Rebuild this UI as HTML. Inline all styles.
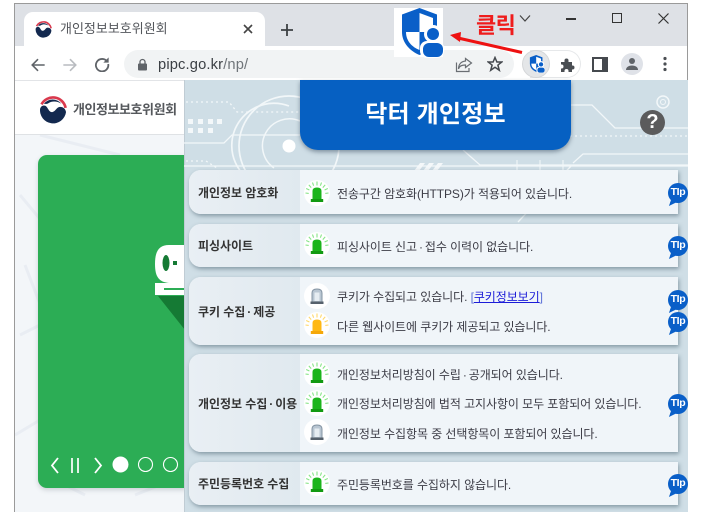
<!DOCTYPE html>
<html lang="ko"><head><meta charset="utf-8"><title>닥터 개인정보</title>
<style>
*{box-sizing:border-box;margin:0;padding:0}
html,body{width:720px;height:512px;overflow:hidden;background:#fff;font-family:"Liberation Sans","Noto Sans CJK KR",sans-serif}
.a{position:absolute}
#win{left:14px;top:3px;width:674px;height:509px;border:1px solid #9a9a9a;border-bottom:0;background:#fff}
.row{position:absolute;left:189px;width:489px;background:#f0f5f9;border-radius:12px 0 0 12px;box-shadow:1px 2px 4px rgba(60,85,100,.5)}
.lab{position:absolute;left:0;top:0;bottom:0;width:111px;background:linear-gradient(90deg,#e9eff4,#e0e9ef);border-radius:12px 0 0 12px;display:flex;align-items:center;padding-left:9px;font-size:12px;font-weight:700;color:#333;letter-spacing:-.05px;white-space:nowrap}
.t{position:absolute;left:337px;font-size:12px;line-height:16px;color:#3c3c46;letter-spacing:-.08px;white-space:nowrap}
.d{margin:0 2px}
.ic{position:absolute;left:304px;width:26px;height:26px;border-radius:50%;background:#fff}
.tip{position:absolute;left:668px;width:20px;height:20px;border-radius:50%;background:#0a5fc8;color:#fff;font-size:10.5px;font-weight:700;line-height:19px;text-align:center;letter-spacing:-.3px}
.tip:after{content:"";position:absolute;left:2px;bottom:-3px;border-left:5px solid #0a5fc8;border-top:3px solid #0a5fc8;border-right:3px solid transparent;border-bottom:3px solid transparent;width:0;height:0;transform:skewX(-20deg)}
</style></head><body>
<svg width="0" height="0" class="a"><defs>
<path id="rays" d="M13 1.500V5.500M8.500 2.500l1.100 3.200M17.500 2.500l-1.100 3.200M4.800 4.800l2.400 2.800M21.200 4.800l-2.400 2.800M2.200 8.500l3.200 1.500M23.800 8.500l-3.200 1.500M1.500 13l3.200.4M24.500 13l-3.200.4" fill="none" stroke-width="1.100"/>
<g id="g"><use href="#rays" stroke="#86e486"/><path d="M8.500 19.500V11q0-3.500 4.500-3.500t4.500 3.500v8.500z" fill="#1cb41c"/><rect x="6.800" y="19" width="12.400" height="3" fill="#129a12"/></g>
<g id="y"><use href="#rays" stroke="#ffd86a"/><path d="M8.500 19.500V11q0-3.500 4.500-3.500t4.500 3.500v8.500z" fill="#ffb814"/><rect x="6.800" y="19" width="12.400" height="3" fill="#f5a80a"/></g>
<g id="n"><path d="M8 19V10q0-4 5-4t5 4v9z" fill="#b9c6d2" stroke="#8494a3" stroke-width="1"/><rect x="10.500" y="9.500" width="5" height="8.500" fill="#e6edf2"/><rect x="6.500" y="18.500" width="13" height="2.500" fill="#56616c"/></g>
<g id="sh"><path d="M25.500 0 43 6.500V24C43 35 35 43 25.500 47 16 43 8 35 8 24V6.500Z" fill="#0a5fc8"/><path d="M25.500 5 39 10V24H25.500ZM12 24H25.500V42C18 39 12 33 12 24Z" fill="#fff"/><circle cx="39" cy="26" r="9" fill="#fff"/><rect x="26" y="33" width="24" height="17" rx="7" fill="#fff"/><circle cx="39" cy="26" r="6" fill="#0a5fc8"/><rect x="29" y="35" width="20" height="14" rx="6" fill="#0a5fc8"/></g>
<g id="emb"><circle cx="10" cy="10" r="9.800" fill="#fff"/><path d="M.8 9A9.300 9.300 0 0 0 19.300 11.500C19 9.500 17.500 7.800 15 7.800 12.500 7.800 12 11 9.500 11.500 7 12 6.500 8 4.500 7 3 6.400 1.500 7 .8 9Z" fill="#13294f"/><path d="M3.500 5.500A8 8 0 0 1 16 5.500C13 3.500 9 3.500 7 5 5.500 6 4.500 5.500 3.500 5.500Z" fill="#13294f"/><path d="M1.800 6A9.200 9.200 0 0 1 19 8.500" fill="none" stroke="#d9394d" stroke-width="1.900"/></g>
</defs></svg>

<div id="win" class="a"></div>
<div class="a" style="left:15px;top:4px;width:672px;height:42px;background:#dee1e6"></div>
<div class="a" style="left:24px;top:12px;width:241px;height:36px;background:#fff;border-radius:9px 9px 0 0"></div>
<svg class="a" style="left:35px;top:21px" width="17" height="17" viewBox="0 0 20 20"><use href="#emb"/></svg>
<div class="a" style="left:60px;top:20px;font-size:13px;line-height:17px;color:#54575c;letter-spacing:0;white-space:nowrap">개인정보보호위원회</div>
<svg class="a" style="left:243px;top:24px" width="10" height="10" viewBox="0 0 10 10"><path d="M1 1l8 8M9 1L1 9" stroke="#444" stroke-width="1.600"/></svg>
<svg class="a" style="left:280px;top:23px" width="14" height="14" viewBox="0 0 14 14"><path d="M7 1v12M1 7h12" stroke="#3c4043" stroke-width="1.800"/></svg>

<div class="a" style="left:15px;top:46px;width:672px;height:35px;background:#fff;border-bottom:1px solid #e2e4e7"></div>
<svg class="a" style="left:30px;top:57px" width="16" height="16" viewBox="0 0 18 18"><path d="M16.500 9H3M9 2.500 2.500 9 9 15.500" fill="none" stroke="#5f6368" stroke-width="1.800"/></svg>
<svg class="a" style="left:62px;top:57px" width="16" height="16" viewBox="0 0 18 18"><path d="M1.500 9h13M9 2.500 15.500 9 9 15.500" fill="none" stroke="#b9bcc0" stroke-width="1.800"/></svg>
<svg class="a" style="left:94px;top:56px" width="16" height="16" viewBox="0 0 18 18"><path d="M15 6.500A7 7 0 1 0 16 9" fill="none" stroke="#5f6368" stroke-width="2"/><path d="M16.500 1.500V7.500H10.500Z" fill="#5f6368"/></svg>
<div class="a" style="left:124px;top:50px;width:390px;height:28px;border-radius:14px;background:#f1f3f4"></div>
<svg class="a" style="left:137px;top:58px" width="11" height="13" viewBox="0 0 11 13"><path d="M3 6V4a2.500 2.500 0 0 1 5 0v2" fill="none" stroke="#5f6368" stroke-width="1.300"/><rect x="1" y="5.500" width="9" height="7" rx="1" fill="#5f6368"/></svg>
<div class="a" style="left:158px;top:55px;font-size:14.700px;line-height:20px;letter-spacing:.15px;color:#3b3f44;white-space:nowrap">pipc.go.kr<span style="color:#70757a">/np/</span></div>
<svg class="a" style="left:455px;top:56px" width="18" height="17" viewBox="0 0 18 17"><path d="M10.500 2.500 16.500 7l-6 4.500V9C6 9 4 10.500 3.500 13 3.500 8.500 6 5.500 10.500 5Z M1.500 6.500V15.500H14V12" fill="none" stroke="#6a6e73" stroke-width="1.200"/></svg>
<svg class="a" style="left:487px;top:56px" width="16" height="16" viewBox="0 0 16 16"><path d="M8 1.500 9.900 6H14.800L10.900 9.100 12.300 14.300 8 11.300 3.700 14.300 5.100 9.100 1.200 6H6.100Z" fill="none" stroke="#45494e" stroke-width="1.500"/></svg>

<div class="a" style="left:530px;top:50px;width:51px;height:28px;border:1px solid #e6e8ea;border-radius:0 14px 14px 0;border-left:0;background:#fff"></div>
<div class="a" style="left:522px;top:50px;width:28px;height:28px;border-radius:50%;background:#e4e6e8;border:1px solid #d5d7d9"></div>
<svg class="a" style="left:527px;top:55px" width="18" height="18" viewBox="0 0 50 50"><use href="#sh"/></svg>
<svg class="a" style="left:560px;top:57px" width="16" height="16" viewBox="0 0 16 16"><path d="M1 5h3.500V3.500a2 2 0 0 1 4 0V5H12v3.500h.5a2 2 0 0 1 0 4H12V15H8.500v-1a2 2 0 0 0-4 0v1H1v-3.500h.5a2 2 0 0 0 0-4H1Z" fill="#4a4e53"/></svg>
<svg class="a" style="left:592px;top:57px" width="16" height="15" viewBox="0 0 16 15"><rect x="1" y="1" width="14" height="13" fill="none" stroke="#45494e" stroke-width="2"/><rect x="10" y="1" width="5" height="13" fill="#45494e"/></svg>
<div class="a" style="left:621px;top:53px;width:22px;height:22px;border-radius:50%;background:#dfe2e8"></div>
<svg class="a" style="left:625px;top:57px" width="14" height="14" viewBox="0 0 14 14"><circle cx="7" cy="4" r="3" fill="#5f6368"/><path d="M1 13c0-3 3-4.500 6-4.500S13 10 13 13Z" fill="#5f6368"/></svg>
<svg class="a" style="left:663px;top:56px" width="4" height="16" viewBox="0 0 4 16"><circle cx="2" cy="2.500" r="1.600" fill="#4a4e53"/><circle cx="2" cy="8" r="1.600" fill="#4a4e53"/><circle cx="2" cy="13.500" r="1.600" fill="#4a4e53"/></svg>

<svg class="a" style="left:519px;top:14px" width="12" height="9" viewBox="0 0 12 9"><path d="M1 1.500 6 7l5-5.500" fill="none" stroke="#444" stroke-width="1.200"/></svg>
<div class="a" style="left:566px;top:18px;width:10px;height:1.500px;background:#333"></div>
<div class="a" style="left:612px;top:13px;width:10px;height:10px;border:1.300px solid #333"></div>
<svg class="a" style="left:658px;top:13px" width="11" height="11" viewBox="0 0 11 11"><path d="M.5.500l10 10M10.500.500l-10 10" stroke="#333" stroke-width="1.200"/></svg>

<div class="a" style="left:394px;top:8px;width:49px;height:49px;background:#fff"></div>
<svg class="a" style="left:394px;top:8px" width="50" height="50" viewBox="0 0 50 50"><use href="#sh"/></svg>
<div class="a" style="left:476px;top:13px;font-size:22px;line-height:26px;font-weight:700;color:#ef1c1c;letter-spacing:-.6px;white-space:nowrap">클릭</div>
<svg class="a" style="left:448px;top:28px" width="76" height="28" viewBox="0 0 76 28"><path d="M10 10 74 24.500" stroke="#ee1111" stroke-width="3"/><path d="M2 7 13 4 12 14Z" fill="#ee1111"/></svg>

<div class="a" style="left:15px;top:81px;width:170px;height:431px;background:#fff"></div>
<svg class="a" style="left:39px;top:96px" width="28" height="28" viewBox="0 0 20 20"><use href="#emb"/></svg>
<div class="a" style="left:73px;top:101px;font-size:13px;line-height:18px;color:#55585c;font-weight:700;letter-spacing:-.45px;white-space:nowrap">개인정보보호위원회</div>
<div class="a" style="left:15px;top:134px;width:170px;height:378px;background:#f3f6f9;border-top:1px solid #dfe2e5"></div>
<svg class="a" style="left:15px;top:135px" width="170" height="377" viewBox="0 0 170 377" fill="none" stroke="#e9edf3" stroke-width="3"><path d="M5 60l25 30M10 130l25 65M5 200l30-15M30 340l40 20M0 300l25-15M120 360l50-20M25 0l80 20"/></svg>
<div class="a" style="left:38px;top:155px;width:148px;height:333px;background:#2cad55;border-radius:9px 0 0 9px;box-shadow:0 2px 5px rgba(90,100,110,.25)"></div>
<svg class="a" style="left:155px;top:245px" width="30" height="85" viewBox="0 0 30 85"><path d="M30 0H14C4 0 0 6 0 19S4 37 14 38H30Z" fill="#fff"/><ellipse cx="11" cy="18" rx="3.500" ry="8" fill="#157a34"/><rect x="18" y="16" width="4" height="4" fill="#157a34"/><path d="M0 38H30V50H0Z" fill="#fff"/><path d="M9 44H30" stroke="#2cad55" stroke-width="2"/><path d="M3 51H30V85Z" fill="#157a34"/></svg>
<svg class="a" style="left:50px;top:454px" width="130" height="24" viewBox="0 0 130 24" fill="none" stroke="#fff"><path d="M8 4 2 11.500 8 19M45 4l6 7.500-6 7.500" stroke-width="1.800"/><path d="M22 4v15M28 4v15" stroke-width="1.700"/><circle cx="70.500" cy="10.500" r="7.500" fill="#fff"/><circle cx="95.500" cy="10.500" r="7" stroke-width="1.100"/><circle cx="120.500" cy="10.500" r="7" stroke-width="1.100"/></svg>

<div class="a" style="left:184px;top:80px;width:504px;height:432px;background:#cfdee6;border-left:1px solid #c0ccd4"></div>
<svg class="a" style="left:184px;top:80px" width="504" height="170" viewBox="0 0 504 170" fill="none" stroke="#f2f7f9">
<path d="M2 22H45L53 32H116M2 81H22L33 88M386 56H504" stroke-width="1.300" stroke-dasharray="2 3"/>
<path d="M0 63H40L48 55H116M386 25H408L431 48H504M389 83 399 74H504M279 70 296 85H504M0 86H504M388 85 334 142" stroke-width="1.300"/>
<circle cx="105" cy="66" r="50" stroke-width="1.700"/>
<path d="M75 105A40 40 0 0 1 105 26" stroke-width="1.700"/>
<path d="M90 88A27 27 0 0 1 116 41" stroke-width="1.500"/>
<circle cx="105" cy="66" r="6.500" fill="#fff" stroke="none"/>
<path d="M4 39h5v5H4zM14 39h5v5h-5zM24 39h5v5h-5zM33 39h5v5h-5zM4 48h5v5H4zM14 48h5v5h-5zM24 48h5v5h-5z" fill="#f4f8fa" stroke="none"/>
<path d="M236 83h5l-6 8h-5zM245 83h5l-6 8h-5zM254 83h5l-6 8h-5z" fill="#f4f8fa" stroke="none"/>
<path d="M333 80v10M356 80v10M379 80v10" stroke-width="1.100"/>
<circle cx="479" cy="22" r="6" stroke-width="1.500"/>
<circle cx="479" cy="22" r="2.500" stroke-width="1"/>
</svg>
<div class="a" style="left:300px;top:80px;width:271px;height:70px;background:#0660c2;border-radius:0 0 18px 18px;box-shadow:0 2px 4px rgba(50,70,90,.5);color:#fff;font-size:24px;font-weight:700;line-height:70px;text-align:center;letter-spacing:.2px;white-space:nowrap">닥터 개인정보</div>
<div class="a" style="left:640px;top:110px;width:25px;height:25px;border-radius:50%;background:#5b5b5c;color:#fff;font-size:20px;font-weight:700;line-height:25px;text-align:center">?</div>

<div class="row" style="top:170px;height:44px"><div class="lab">개인정보 암호화</div></div>
<div class="row" style="top:224px;height:43px"><div class="lab">피싱사이트</div></div>
<div class="row" style="top:277px;height:68px"><div class="lab"><span>쿠키 수집<span class="d">·</span>제공</span></div></div>
<div class="row" style="top:354px;height:98px"><div class="lab"><span>개인정보 수집<span class="d">·</span>이용</span></div></div>
<div class="row" style="top:462px;height:43px"><div class="lab">주민등록번호 수집</div></div>

<div class="ic" style="top:180px"><svg width="26" height="26"><use href="#g"/></svg></div>
<div class="ic" style="top:232px"><svg width="26" height="26"><use href="#g"/></svg></div>
<div class="ic" style="top:283px"><svg width="26" height="26"><use href="#n"/></svg></div>
<div class="ic" style="top:312px"><svg width="26" height="26"><use href="#y"/></svg></div>
<div class="ic" style="top:361px"><svg width="26" height="26"><use href="#g"/></svg></div>
<div class="ic" style="top:390px"><svg width="26" height="26"><use href="#g"/></svg></div>
<div class="ic" style="top:419px"><svg width="26" height="26"><use href="#n"/></svg></div>
<div class="ic" style="top:470px"><svg width="26" height="26"><use href="#g"/></svg></div>

<div class="t" style="top:186px">전송구간 암호화(HTTPS)가 적용되어 있습니다.</div>
<div class="t" style="top:239px">피싱사이트 신고<span class="d">·</span>접수 이력이 없습니다.</div>
<div class="t" style="top:289px">쿠키가 수집되고 있습니다. <span style="color:#5a6fd8">[<u style="color:#1c1cd8">쿠키정보보기</u>]</span></div>
<div class="t" style="top:319px">다른 웹사이트에 쿠키가 제공되고 있습니다.</div>
<div class="t" style="top:367px">개인정보처리방침이 수립<span class="d">·</span>공개되어 있습니다.</div>
<div class="t" style="top:396px">개인정보처리방침에 법적 고지사항이 모두 포함되어 있습니다.</div>
<div class="t" style="top:426px">개인정보 수집항목 중 선택항목이 포함되어 있습니다.</div>
<div class="t" style="top:477px">주민등록번호를 수집하지 않습니다.</div>

<div class="tip" style="top:183px">TIp</div>
<div class="tip" style="top:236px">TIp</div>
<div class="tip" style="top:290px">TIp</div>
<div class="tip" style="top:312px">TIp</div>
<div class="tip" style="top:394px">TIp</div>
<div class="tip" style="top:474px">TIp</div>
</body></html>
